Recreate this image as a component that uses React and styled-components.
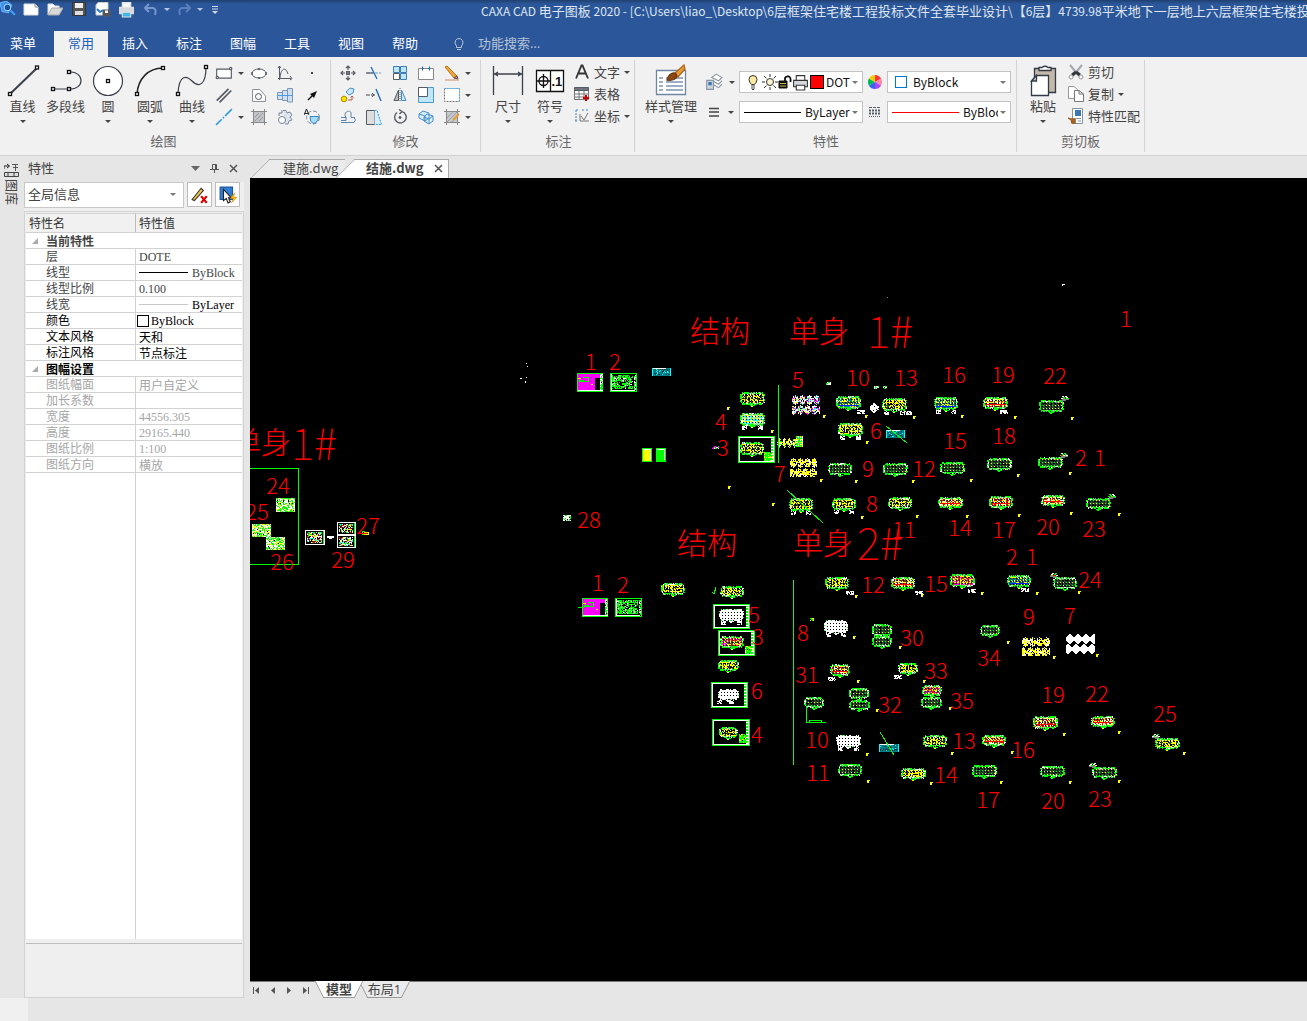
import React from 'react';
import styled, { createGlobalStyle, css } from 'styled-components';

const UI = "'Open Sans', 'Noto Sans CJK SC', sans-serif";
const HAN = "'Noto Sans CJK SC', sans-serif";
const BLUE = '#2b579a';
const EDGE = '#d2d2d2';

const Global = createGlobalStyle`
  * { box-sizing: border-box; }
  body { margin: 0; overflow: hidden; background: #e6e6e6; color: #444; font: 13px/18px ${UI}; }
  button, select, input { font: inherit; color: inherit; margin: 0; padding: 0; border: 0; background: none; }
  svg { display: block; flex: none; }
`;

const Shell = styled.div`display: flex; flex-direction: column; height: 100vh;`;

/* ---------- title bar ---------- */
const TitleBar = styled.header`
  display: flex; align-items: flex-start; height: 31px; overflow: hidden;
  background: linear-gradient(#20406f, ${BLUE} 4px); color: #dfe6f1;
`;
const QuickBar = styled.div`display: flex; width: 225px; flex: none; align-items: center; height: 18px; gap: 3px;`;
const QuickButton = styled.button`display: flex; align-items: center; justify-content: center; width: ${p => p.$w || 21}px; height: 18px; color: #c9d3e4;`;
const Title = styled.h1`
  margin: 2px 0 0 256px; font: 400 13px/18px ${HAN}; white-space: pre;
  span { font-size: 12px; }
`;

const MenuRow = styled.nav`display: flex; height: 26px; background: ${BLUE}; color: #fff;`;
const MenuTab = styled.button`
  width: ${p => p.$first ? 46 : 54}px; margin-right: ${p => p.$first ? 8 : 0}px; height: 26px; padding-bottom: 2px;
  ${p => p.$on && css`background: #f1f1f1; color: #1e62b8;`}
`;
const Search = styled.label`
  display: flex; align-items: center; gap: 12px; margin-left: 20px; color: #b7c3d8;
  input { width: 100px; height: 22px; padding-bottom: 2px; outline: 0; }
  input::placeholder { color: #b7c3d8; opacity: 1; }
`;

/* ---------- ribbon ---------- */
const Ribbon = styled.section`display: flex; height: 99px; padding: 3px 0; background: #f1f1f1; border-bottom: 1px solid ${EDGE}; color: #444;`;
const Group = styled.div`display: flex; flex-direction: column; padding: 2px ${p => p.$end ?? 4}px 0 ${p => p.$pad ?? 4}px; border-right: 1px solid ${EDGE}; flex: none;`;
const GroupBody = styled.div`display: flex; height: 70px;`;
const GroupName = styled.div`text-align: center; color: #666; height: 20px; line-height: 18px;`;
const BigButton = styled.button`
  display: flex; flex-direction: column; align-items: center; width: ${p => p.$w || 42}px; padding-top: 1px; white-space: nowrap;
  svg { height: 34px; }
  span { height: 20px; line-height: 18px; }
`;
const Arrow = styled.i`display: block; flex: none; width: 0; height: 0; border: 3px solid transparent; border-top-color: ${p => p.$c || '#444'}; border-bottom: 0; margin-top: ${p => p.$t || 0}px;`;
const IconGrid = styled.div`display: grid; grid-template-columns: ${p => p.$cols}; grid-template-rows: repeat(3, 22px);`;
const IconButton = styled.button`display: flex; align-items: center; justify-content: ${p => p.$start ? 'flex-start' : 'center'}; gap: 5px; min-width: 26px; padding-left: ${p => p.$start || 0}px;`;
const LineButton = styled.button`display: flex; align-items: center; height: 22px; gap: 4px; padding: 0 0 2px 3px;`;
const Column = styled.div`display: flex; flex-direction: column; gap: ${p => p.$gap || 0}px; padding-top: ${p => p.$top || 0}px;`;
const ComboRow = styled.div`display: flex; align-items: center; height: 22px;`;
const ComboIcon = styled.button`display: flex; align-items: center; justify-content: center; gap: 6px; width: ${p => p.$w}px; height: 22px;`;
const Combo = styled.label`
  display: flex; align-items: center; width: 124px; height: 22px; padding: 0 4px; background: #fff; border: 1px solid #c3c3c3; color: #111;
  select { flex: 1; min-width: 0; width: 0; appearance: none; outline: 0; overflow: hidden; text-overflow: clip; font: 12px/18px ${HAN}; margin: 0 2px 0 ${p => p.$gap || 4}px; }
`;

/* ---------- work area ---------- */
const Work = styled.main`flex: 1; display: flex; min-height: 0;`;
const Rail = styled.aside`width: 24px; flex: none; padding: 7px 4px; font-size: 13px;`;
const RailTab = styled.button`display: flex; flex-direction: column; align-items: center; width: 15px; gap: 1px; span { writing-mode: vertical-rl; text-orientation: sideways; line-height: 15px; height: 27px; }`;
const Panel = styled.section`width: 220px; flex: none; display: flex; flex-direction: column; background: #efefef;`;
const PanelHead = styled.div`display: flex; align-items: center; height: 26px; padding: 0 1px 2px 4px; background: #e6e6e6; h2 { flex: 1; margin: 0; font-size: 13px; line-height: 18px; font-weight: 400; } button { width: 19px; display: flex; justify-content: center; }`;
const PanelTools = styled.div`display: flex; gap: 3px; height: 29px;`;
const Scope = styled.label`display: flex; align-items: center; width: 160px; height: 26px; background: #fff; border: 1px solid #c8c8c8; padding: 0 7px 2px 3px; select { flex: 1; appearance: none; outline: 0; }`;
const ToolButton = styled.button`display: flex; align-items: center; justify-content: center; width: 25px; height: 25px; background: #fff; border: 1px solid #bdbdbd;`;
const Frame = styled.div`flex: 1; display: flex; flex-direction: column; min-height: 0; border: 1px solid ${EDGE}; padding: 1px;`;
const Sheet = styled.div`flex: 1; display: flex; flex-direction: column; background: #fff;`;
const Props = styled.table`
  width: 100%; table-layout: fixed; border-collapse: separate; border-spacing: 0; font: 12px/15px ${HAN}; color: #333;
  th, td { height: 16px; padding: 0; text-align: left; font-weight: 400; white-space: nowrap; border-bottom: 1px solid ${EDGE}; line-height: 15px; }
  thead th { width: 110px; height: 20px; line-height: 18px; padding-left: 3px; background: #f1f1f1; border-top: 1px solid ${EDGE}; }
  thead th:last-child { width: auto; }
  thead th:first-child { border-right: 1px solid #bbb; }
`;
const Name = styled.th`&& { padding-left: 20px; border-right: 1px solid ${EDGE}; color: ${p => p.$c}; } span { display: block; height: 15px; line-height: 14px; }`;
const Section = styled.th`&& { color: ${p => p.$c}; font-weight: 700; } div { display: flex; align-items: center; gap: 8px; padding-left: 6px; height: 15px; line-height: 14px; }`;
const Value = styled.td`
  && { color: ${p => p.$c}; }
  > div { display: flex; align-items: center; gap: ${p => p.$box ? 2 : 4}px; padding-left: ${p => p.$box ? 1 : 3}px; height: 15px; line-height: 14px; font-family: ${p => p.$latin ? "'Liberation Serif', serif" : HAN}; }
`;
const Rule = styled.span`width: 49px; height: 1px; background: ${p => p.$c};`;
const Swatch = styled.span`width: ${p => p.$s || 12}px; height: ${p => p.$s || 12}px; flex: none; border: 1px solid ${p => p.$line || '#000'}; background: ${p => p.$fill || '#fff'}; margin-left: ${p => p.$l || 0}px;`;
const Filler = styled.div`flex: 1; display: flex; &::before { content: ''; width: 110px; box-sizing: border-box; border-right: 1px solid ${EDGE}; }`;
const Notes = styled.div`height: 53px; margin-top: 4px; border-top: 1px solid #bdbdbd; background: #efefef;`;

const Docs = styled.section`flex: 1; min-width: 0; margin-left: 6px; display: flex; flex-direction: column;`;
const DocTabs = styled.div`display: flex; height: 22px; padding: 3px 0 0 10px; background: #e6e6e6;`;
const DocTab = styled.button`
  position: relative; z-index: 0; height: 19px; width: ${p => p.$w}px; padding: 0 0 2px ${p => p.$pad}px; display: flex; align-items: center; gap: 10px; white-space: nowrap;
  border: solid #aaa; border-width: 1px ${p => p.$on ? 1 : 0}px 0 0; background: ${p => p.$on ? '#fff' : '#ebebeb'}; margin-left: 10px; font-family: ${HAN}; font-weight: ${p => p.$on ? 700 : 400};
  &::before { content: ''; position: absolute; z-index: -1; left: -10px; top: -1px; width: 28px; height: 19px; box-sizing: border-box; border: solid #aaa; border-width: 1px 0 0 1px; background: inherit; transform: skewX(-45deg); }
`;
const Canvas = styled.div`flex: 1; min-height: 0; background: #000; overflow: hidden; svg { width: 100%; height: 100%; }`;
const LayoutTabs = styled.div`display: flex; height: 17px; border-top: 1px solid #777;`;
const Nav = styled.button`width: ${p => p.$w || 16}px; height: 17px; display: flex; align-items: center; justify-content: center;`;
const LayoutTab = styled.button`
  position: relative; z-index: ${p => p.$on ? 2 : 1}; width: ${p => p.$w}px; height: 16px; line-height: 12px; padding-bottom: 2px; font-weight: ${p => p.$on ? 700 : 400}; margin-left: ${p => p.$on ? 4 : 0}px;
  &::before, &::after { content: ''; position: absolute; z-index: -1; top: -1px; bottom: 0; width: 55%; background: ${p => p.$on ? '#fff' : '#ebebeb'}; border-bottom: 1px solid #999; }
  &::before { left: 2px; border-left: 1px solid #999; transform: skewX(27deg); }
  &::after { right: 2px; border-right: 1px solid #999; transform: skewX(-27deg); }
`;
const Status = styled.footer`height: 23px; display: flex; &::before { content: ''; width: 28px; background: #f0f0f0; }`;

/* ---------- icons ---------- */
const G = ({ s = 18, v = 16, h, children }) => (
  <svg width={s} height={h || s} viewBox={`0 0 ${v} ${h ? (h * v) / s : v}`} fill="none" stroke="#555c66" strokeWidth="1" aria-hidden="true">{children}</svg>
);
const Knot = ({ x, y }) => <rect x={x - 1.5} y={y - 1.5} width="3" height="3" fill="#fff" stroke="#111" />;
const Big = ({ children }) => (
  <svg width="34" height="34" viewBox="0 0 34 34" fill="none" stroke="#3b414b" strokeWidth="1.3" aria-hidden="true">{children}</svg>
);

const bigIcons = {
  line: <Big><path d="M4 31 31 5" strokeWidth="2" /><Knot x={4} y={31} /><Knot x={31} y={4.5} /></Big>,
  poly: <Big><path d="M4 26H22M20 9C36 8 36 27 20 26" strokeWidth="1.2" /><Knot x={4} y={26} /><Knot x={20} y={26} /><Knot x={20} y={9} /></Big>,
  circle: <Big><circle cx="17" cy="18" r="14.5" fill="#fff" strokeWidth="1.2" /><Knot x={17} y={18} /></Big>,
  arc: <Big><path d="M4 31C5 16 15 5 30 5" strokeWidth="1.5" stroke="#222" /><Knot x={4} y={31} /><Knot x={30} y={5} /></Big>,
  curve: <Big><path d="M3 31C4 10 12 13 17 18C24 25 31 22 31 4" strokeWidth="1.2" /><Knot x={3} y={31} /><Knot x={31} y={4} /></Big>,
  dim: <Big><path d="M2.500 3V32M31.500 3V32M3 11H31M7 9 4 11 7 13M27 9 30 11 27 13" /></Big>,
  sym: <Big><path d="M3.500 7.500H30.500V28.500H3.500ZM17.500 7.500V28.500" fill="#fff" stroke="#111" /><circle cx="10.5" cy="18" r="4.500" stroke="#111" /><path d="M10.500 11V25M4 18H17" stroke="#111" /><text x="18.500" y="23" fontSize="13" fontWeight="700" fontFamily="Liberation Sans" fill="#111" stroke="none">.1</text></Big>,
  style: <Big><path d="M2.500 7.500H31.500V31.500H2.500Z" fill="#fff" stroke="#6f86a3" /><path d="M5 15H9M12 15H29M5 19H9M12 19H29M5 23H9M12 23H29M5 27H9M12 27H29" stroke="#7c93b3" /><path d="M21 10 30 2 31 6 24 14Z" fill="#e39a3c" stroke="#b06a1d" /><path d="M13 17C15 10 20 9 22 11 25 16 18 18 13 17Z" fill="#8a4a13" stroke="#6d3a10" /></Big>,
  paste: <Big><path d="M8.500 5.500H29.500V29.500H8.500Z" fill="#c3b8a9" stroke="#333a47" /><path d="M13 7.500V4.500H16Q19 2 22 4.500H25V7.500Z" fill="#fff" stroke="#333a47" /><path d="M10.500 12.500H22.500V32.500H5.500V18Z" fill="#fff" stroke="#333a47" /><path d="M10.500 12.500V18H5.500Z" fill="#ccd" stroke="#333a47" /></Big>,
};

const draw = [
  <G><path d="M1.500 4.500H14.500V12.500H1.500Z" fill="#fff" /><circle cx="2" cy="12" r="1" fill="#fff" /><circle cx="14" cy="4" r="1" fill="#fff" /></G>,
  <G s={16}><ellipse cx="8" cy="8.500" rx="7" ry="4.500" fill="#fff" /><circle cx="8" cy="4" r=".8" /><path d="M1 7V10M15 7V10M7 13H9" strokeWidth="1.500" /></G>,
  <G s={16}><path d="M2.500 1V15M1 13.500H14" /><path d="M3 13C4 2 9 2 11 9M13 11 15 13.500 13 15M1 3 2.500 1 4 3" /></G>,
  <G s={16}><rect x="7" y="7" width="2" height="2" fill="#444" stroke="none" /></G>,
  <G><path d="M1.500 13 12 2.500M4 14.500 14.500 4" strokeWidth="1.500" /></G>,
  <G s={16}><path d="M1.500 14.500V2.500H9L14.500 9V14.500Z" fill="#fff" stroke="#8b929c" /><circle cx="7.500" cy="9.500" r="3" /></G>,
  <G s={16}><path d="M.5 5.500H5.500V12.500H.5ZM5.500 3.500H10.500V13.500H5.500ZM10.500 1.500H15.500V15H10.500Z" fill="#cfe0f2" stroke="#7d95b2" /><path d="M0 8.500H16" stroke="#4b9ce0" /></G>,
  <G s={16}><path d="M4 13 9 8" stroke="#111" strokeWidth="1.400" /><path d="M13 4 6 7 10 11Z" fill="#111" stroke="none" /></G>,
  <G><path d="M1 15 6 10M7 9 8 8M9 7 15 1" stroke="#2c9be0" strokeWidth="1.300" /></G>,
  <G s={16}><path d="M2.500 2.500H13.500V13.500H2.500Z" fill="#bfc3c8" /><path d="M2.500 0V16M13.500 0V16M0 2.500H16M0 13.500H16" stroke="#888" /><path d="M4 12 12 4M4 8 8 4M8 12 12 8" stroke="#999" /></G>,
  <G s={16}><path d="M6 1.500H9L10 4 13 3 15 6 13 8 15 11 12 12 11 15H8" fill="#dde4ec" stroke="#7b8ba0" /><circle cx="5" cy="11" r="3.500" fill="#fff" stroke="#6e7f96" /><path d="M2 7V4H5V1" stroke="#6e7f96" /></G>,
  <G s={16}><circle cx="9" cy="8.500" r="6.500" stroke="#7c8794" strokeDasharray="4 2" /><path d="M6 7.500H14.500Q14 14 9 14.500 6 13 6 7.500Z" fill="#a7dcf8" stroke="#3887c5" /><path d="M0 6 2.500 0 5 6M1 4.500H4" stroke="#222" /></G>,
];
const edit = [
  <G s={16}><path d="M8 1V5M8 11V15M1 8H5M11 8H15M6 3 8 1 10 3M6 13 8 15 10 13M3 6 1 8 3 10M13 6 15 8 13 10" strokeWidth="1.200" /><rect x="6.500" y="6.500" width="3" height="3" fill="#777" /></G>,
  <G s={16}><path d="M1 8H15" strokeDasharray="3 1" stroke="#6a9cd0" /><path d="M5 2 11 14" stroke="#1a69b8" strokeWidth="1.300" /><path d="M0 8H7" stroke="#444" /></G>,
  <G s={16}><path d="M1.500 1.500H7.500V7.500H1.500ZM8.500 1.500H14.500V7.500H8.500ZM8.500 8.500H14.500V14.500H8.500Z" fill="#bfe6fb" stroke="#3c7ebc" /><path d="M1.500 8.500H7.500V14.500H1.500Z" fill="#fff" /></G>,
  <G s={16}><path d="M4 3.500H.5V14.500H15.500V3.500H12M6 3.500H10" fill="#fff" stroke="#888" /><path d="M4.500 1.500V5.500M11.500 1.500V5.500M4 3.500H6M10 3.500H12" stroke="#1a69b8" /></G>,
  <G s={16}><path d="M1 2 3 1 13 11 10 13Z" fill="#efa63a" stroke="#b97519" /><path d="M10 13 13 11 14 14Z" fill="#f08080" stroke="#555" /><path d="M1 15H15" stroke="#d08a70" /></G>,
  <G s={16}><circle cx="4" cy="12" r="2.800" fill="#ffe000" stroke="#a89000" /><path d="M6 5 10 1 14 2 13 6 9 8Z" fill="#c8e9fb" stroke="#4a8ec7" /><path d="M8 13H12V9M10.500 10.500 12 9 13.500 10.500" stroke="#b55a4a" /></G>,
  <G s={16}><path d="M0 8H9" strokeDasharray="4 1" stroke="#444" /><path d="M10 2 15 14" stroke="#1a69b8" strokeWidth="1.300" /><path d="M6 6 8 8 6 10" /></G>,
  <G s={16}><path d="M6.500 3V13.500H2Z" fill="#bbb" /><path d="M9.500 3V13.500H14Z" fill="#bfe6fb" stroke="#4a8ec7" /><path d="M8 1V15" strokeDasharray="1 1" /></G>,
  <G s={16}><path d="M.5 .5H15.500V15.500H.5Z" fill="#bfe6fb" stroke="#4b9ac9" /><path d="M.5 .5H9.500V9.500H.5Z" fill="#fff" /></G>,
  <G s={16}><path d="M.5 1.500H15.500V14.500H.5Z" fill="#fff" stroke="#777" strokeDasharray="2 1" /><path d="M0 1.500H15M15.500 1V15" stroke="#55b3ea" strokeDasharray="2 1" /></G>,
  <G s={16}><path d="M1 8.500H6C2 2 12 0 11 5V8.500H15M1 13.500H14Q17 11 14 8.500M1 11.500H6M6 11.500V8" stroke="#5f86ad" /></G>,
  <G s={16}><path d="M.5 1.500H8.500V15.500H.5Z" fill="#ddd" /><path d="M8.500 1.500H11L15.500 15.500H8.500" fill="#d5effc" stroke="#2c9be0" strokeDasharray="2 1" /></G>,
  <G s={16}><path d="M5 3.500A5.800 5.800 0 1 0 10 2.600M7 .5 10 2.500 7.500 5" strokeWidth="1.400" /><circle cx="8" cy="8.500" r="1" fill="#444" /></G>,
  <G s={16}><path d="M1 5 5 2 11 4V9L7 12 1 9ZM6 8 9 5 15 7V12L11 15 6 12ZM1 5 7 7V12M6 8 11 10V15M11 10 15 7" fill="#d5effc" stroke="#4a8ec7" /></G>,
  <G s={16}><path d="M2.500 2.500H13.500V13.500H2.500Z" fill="#c5c9ce" /><path d="M0 2.500H16M0 13.500H16M2.500 0V16M13.500 0V16" stroke="#888" /><path d="M3 9 9 3M3 13 13 3M8 13 13 8" stroke="#9a9fa6" /><path d="M9 11 15 5" stroke="#eb9d2c" strokeWidth="2" /></G>,
];
const rows = {
  text: <G s={16}><path d="M2 14.500 7.500 1.500H8.500L14 14.500M4.500 9.500H11.500" strokeWidth="1.800" stroke="#333" /></G>,
  table: <G s={16}><path d="M.5 2.500H14.500V13.500H.5ZM.5 8H14.500M.5 11H14.500M5 5V13.500M10 5V13.500" fill="#fff" stroke="#777" /><path d="M.5 1.500H14.500V4.500H.5Z" fill="#70757c" /><path d="M12 9V15M9 12H15" stroke="#c00" strokeWidth="2" /></G>,
  coord: <G s={16}><path d="M2 2V14M2 2H5M9 1V4M13 1V4M1 13H4" stroke="#4489c7" strokeDasharray="2 1" /><path d="M6 6V13H15M7 8 10 12 14 5" stroke="#777" /></G>,
  cut: <G s={16}><path d="M2 1 11 12M14 1 5 12" strokeWidth="2" stroke="#a4a8ae" /><path d="M8 8 12 11M8 8 4 11" strokeWidth="3" stroke="#33373d" /><circle cx="3" cy="13" r="2" fill="#fff" stroke="#999" /><circle cx="13" cy="13" r="2" fill="#fff" stroke="#999" /></G>,
  copy: <G s={16}><path d="M.5 .5H6L9.500 3.500V12.500H.5Z" fill="#fff" stroke="#999" /><path d="M6.500 4.500H11L15.500 8V15.500H6.500ZM11 4.500V8H15.500" fill="#fff" stroke="#777" /></G>,
  match: <G s={16}><path d="M4.500 .5H14.500V15.500H4.500Z" fill="#fff" stroke="#8193a6" /><path d="M7 2H13V8H7Z" fill="#3a76b4" stroke="none" /><path d="M8 10.500H13M10 13H13" stroke="#8193a6" /><path d="M0 10 4 12M3 11H7V15H4Z" stroke="#9c5c22" fill="#b5651d" strokeWidth="1.500" /></G>,
};
const Bulb = <G s={18} v={18}><path d="M5 6.500A4 4 0 1 1 13 6.500Q13 9 10.500 11.500H7.500Q5 9 5 6.500Z" fill="#ffeaa0" stroke="#333" /><path d="M7 13H11M7 15H11M8 16.500H10" stroke="#444" /></G>;
const Sun = <G s={16}><circle cx="8" cy="8" r="3.500" fill="#fff6cf" stroke="#333" /><path d="M8 0V3M8 13V16M0 8H3M13 8H16M2 2 4.500 4.500M11.500 11.500 14 14M2 14 4.500 11.500M11.500 4.500 14 2" stroke="#333" /></G>;
const Lock = <G s={14} v={14}><path d="M1 6H9V13H1Z" fill="#111" stroke="#111" /><path d="M2 8.500H8M2 11H8" stroke="#c7bc3a" /><path d="M7 6V3Q8 1 11 1.500 13 2 12.500 7" stroke="#111" strokeWidth="1.800" /></G>;
const Printer = ({ c = '#333' }) => <G s={17}><path d="M4 6V1.500H12V6" fill="#fff" stroke={c} /><path d="M1.500 6H14.500V12H1.500Z" fill="#d5d9de" stroke={c} /><path d="M4 10.500H12V15H4Z" fill={c === '#333' ? '#fff' : '#40b6e8'} stroke={c} /></G>;

/* ---------- model space ---------- */
const LIME = '#00ff00', YEL = '#ffff00', WHT = '#ffffff', RED = '#ff0000', CYN = '#00ffff', TEAL = '#00808c', DRK = '#234a26', MAG = '#ff00ff', GRY = '#808080', BLK = '#000000';
const inks = {
  y: [DRK, YEL, YEL, BLK], d: [DRK, DRK, DRK, BLK], r: [DRK, YEL, RED, WHT], b: [TEAL, DRK, YEL, TEAL],
  c: [CYN, CYN, YEL, WHT], m: [YEL, DRK, MAG, RED], w: [WHT, WHT, WHT, WHT],
};
/* paint order: areas first, then outlines and highlights */
const layers = Object.fromEntries([DRK, TEAL, GRY, MAG, LIME, YEL, RED, '#0020ff', CYN, '#003c44', WHT, BLK].map((c) => [c, []]));
const dot = (x, y, c, w = 1, h = 1) => { if (c !== BLK) layers[c].push(`M${x} ${y}h${w}v${h}h-${w}z`); };
const noise = (x, y, k = 0) => {
  let n = (x * 374761393 + y * 668265263 + k * 2147483) | 0;
  n = Math.imul(n ^ (n >>> 13), 1274126177);
  return ((n ^ (n >>> 16)) >>> 0) / 4294967296;
};
const box = (x, y, w, h, c) => { dot(x, y, c, w, 1); dot(x, y + h - 1, c, w, 1); dot(x, y, c, 1, h); dot(x + w - 1, y, c, 1, h); };
function building(x, y, w, h, kind = 'd', wing) {
  const white = kind === 'w';
  for (let j = 0; j < h; j++) for (let i = 0; i < w; i++) {
    const edge = Math.min(i, w - 1 - i, j, h - 1 - j);
    const r = noise(x + i, y + j);
    if ((i < 2 || i > w - 3) && (j < 2 || j > h - 3)) continue;
    if (edge === 0) { if (r > 0.3) dot(x + i, y + j, white ? (r > 0.85 ? LIME : WHT) : r > 0.88 ? WHT : LIME); }
    else if (edge === 1) dot(x + i, y + j, white ? WHT : r > 0.65 ? WHT : LIME);
    else if (kind === 'b' && j === h - 4) dot(x + i, y + j, '#0020ff');
    else if (kind === 'r' && j === h - 5) dot(x + i, y + j, RED);
    else if (i % 3 === 0 && j % 3 === 0) continue;
    else if (j % 3 === 2 && i % 3 === 1 && !white) dot(x + i, y + j, kind === 'd' && r < 0.4 ? LIME : r > 0.2 ? YEL : WHT);
    else dot(x + i, y + j, inks[kind][Math.floor(r * 4)]);
  }
  dot(x + (w >> 1) - 2, y + h, white ? WHT : LIME, 5, 1);
  dot(x + (w >> 1) - 1, y + h + 1, white ? WHT : kind === 'd' ? LIME : YEL, 2, 1);
  if (wing) for (let i = 0; i < 12; i++) {
    const px = wing > 0 ? x + w - 8 + i : x + 8 - i;
    dot(px, y - Math.floor(i / 3) + 1, GRY, 2, 2);
    if (i > 4) { dot(px, y - 4 + (i % 3), noise(px, y) > 0.5 ? LIME : WHT, 2, 1); dot(px, y - 2, noise(px, y, 2) > 0.6 ? RED : LIME); }
  }
}
function feet(x, y, w, h) {
  [2, w - 7].forEach((dx) => { for (let j = 0; j < 4; j++) for (let i = 0; i < 5; i++) if (noise(x + i + dx, y + j) > 0.3) dot(x + dx + i, y + h + j, WHT); });
}
function speckle(x, y, w, h, colors, fill = 0.8) {
  for (let j = 0; j < h; j++) for (let i = 0; i < w; i++) if (noise(x + i, y + j) < fill) dot(x + i, y + j, colors[Math.floor(noise(x + i, y + j, 7) * colors.length)]);
}
/* rows of small round detail drawings; the second row is shifted */
function details(x, y, w, h, colors, gap = 7, fill = 0.85) {
  for (let j = 0; j < h; j++) for (let i = 0; i < w; i++) {
    const u = ((i + (j > 9 ? 2 : 0)) % gap) - gap / 2 + 0.5;
    const v = (j % 10) - 4.5;
    if ((u * u) / ((gap / 2 - 0.3) ** 2) + (v * v) / 22 < 1 && noise(x + i, y + j) < fill) dot(x + i, y + j, colors[Math.floor(noise(x + i, y + j, 3) * colors.length)]);
  }
}
function sheet(x, y, w, h) {
  box(x, y, w, h, LIME); box(x + 1, y + 1, w - 2, h - 2, WHT);
  for (let j = 2; j < h - 2; j++) dot(x + w - 4, y + j, j % 3 ? LIME : WHT, 3, 1);
}

[
  [740, 392, 25, 13, 'y'], [740, 413, 25, 13, 'c'], [836, 396, 25, 13, 'b'], [882, 398, 25, 13, 'y'], [934, 397, 24, 13, 'b'], [983, 397, 25, 12, 'r'],
  [1039, 400, 25, 12, 'd', 1], [838, 423, 25, 13, 'y'], [828, 463, 24, 12, 'd'], [883, 463, 25, 12, 'd'], [940, 462, 25, 12, 'd'], [987, 458, 25, 12, 'd'],
  [1038, 457, 25, 11, 'd', 1], [789, 498, 24, 13, 'y'], [832, 498, 24, 12, 'y'], [888, 497, 24, 12, 'y'], [938, 497, 25, 11, 'r'], [989, 496, 24, 12, 'r'],
  [1041, 495, 24, 11, 'r'], [1086, 498, 25, 11, 'd', 1], [825, 577, 24, 12, 'y'], [891, 577, 24, 12, 'r'], [950, 574, 25, 13, 'm'], [1007, 575, 24, 12, 'b'],
  [1053, 577, 24, 12, 'd', -1], [824, 620, 24, 13, 'w'], [872, 624, 20, 12, 'd'], [872, 636, 20, 11, 'd'], [980, 625, 20, 11, 'd'], [830, 664, 20, 12, 'r'],
  [898, 663, 20, 11, 'y'], [849, 688, 20, 11, 'd'], [849, 700, 21, 10, 'd'], [922, 685, 20, 11, 'm'], [921, 697, 21, 11, 'd'], [804, 697, 20, 11, 'd'],
  [836, 735, 25, 12, 'w'], [923, 735, 24, 12, 'y'], [982, 735, 24, 11, 'r'], [1033, 716, 25, 13, 'r'], [1091, 716, 24, 11, 'r'], [1155, 738, 25, 11, 'y', -1],
  [838, 764, 24, 12, 'd'], [901, 768, 25, 11, 'y'], [972, 765, 25, 12, 'd'], [1040, 766, 25, 11, 'd'], [1092, 767, 25, 11, 'd', -1],
  [661, 583, 24, 12, 'y'], [720, 586, 24, 11, 'y'], [718, 660, 21, 11, 'y'],
].forEach((b) => building(...b));
[[740, 413, 25, 13], [838, 423, 25, 13], [934, 397, 24, 13], [824, 620, 24, 13], [789, 498, 24, 13], [832, 498, 24, 12], [882, 398, 25, 13], [836, 735, 25, 12]].forEach((b) => feet(...b));
[[738, 436, 37, 27], [713, 604, 37, 25], [718, 630, 37, 26], [711, 682, 37, 26], [712, 719, 38, 27]].forEach((b) => sheet(...b));
[[740, 442, 24, 13, 'y'], [719, 609, 25, 12, 'w'], [720, 636, 24, 12, 'm'], [718, 689, 21, 11, 'w'], [719, 727, 19, 11, 'y']].forEach((b) => building(...b));
feet(719, 609, 25, 12); feet(715, 689, 21, 11);
[[764, 452], [745, 646], [739, 734]].forEach(([x, y]) => speckle(x, y, 9, 9, [LIME, LIME, LIME, YEL], 0.95));
[[577, 373], [582, 598]].forEach(([x, y]) => {
  box(x, y, 26, 19, LIME); dot(x + 1, y + 1, MAG, 22, 4); dot(x + 1, y + 5, MAG, 17, 12); dot(x + 1, y + 17, WHT, 24, 1);
  dot(x + 1, y + 5, YEL, 3, 1); dot(x + 2, y + 7, LIME, 5, 2); dot(x + 6, y + 4, LIME, 6, 1); dot(x + 11, y + 4, LIME, 1, 5); dot(x + 6, y + 8, LIME, 6, 1); dot(x + 14, y + 11, YEL, 2, 1);
  speckle(x + 23, y + 1, 3, 17, [WHT, LIME], 0.9);
});
[[610, 373], [615, 598]].forEach(([x, y]) => { speckle(x + 2, y + 2, 21, 14, [LIME, LIME, LIME, LIME, LIME, WHT, BLK], 0.75); box(x, y, 27, 19, LIME); dot(x + 1, y + 1, WHT, 1, 17); dot(x + 1, y + 17, WHT, 24, 1); speckle(x + 24, y + 2, 2, 15, [LIME, WHT]); });
[[652, 368, 19, 8], [886, 430, 19, 8], [879, 744, 20, 8]].forEach(([x, y, w, h]) => {
  dot(x, y, TEAL, w, h); speckle(x + 1, y + 1, w - 2, h - 2, ['#003c44', CYN, '#003c44'], 0.35); dot(x + 1, y, WHT, w - 6, 1); dot(x, y, CYN, 1, h); dot(x + w - 1, y, CYN, 1, h);
});
[[642, YEL], [656, LIME]].forEach(([x, c]) => { box(x, 448, 10, 14, LIME); dot(x + 1, 450, c, 8, 11); dot(x + 1, 449, WHT, 7, 1); dot(x + 8, 449, WHT, 1, 11); });
speckle(563, 515, 8, 6, [WHT, WHT, LIME]);
speckle(712, 446, 7, 3, [MAG, LIME, WHT]);
details(792, 395, 28, 20, [WHT, WHT, YEL, CYN, WHT, MAG]);
details(777, 438, 19, 10, [YEL, WHT, YEL, LIME], 5);
speckle(796, 436, 7, 11, [LIME, LIME, WHT, YEL], 1);
details(790, 458, 27, 19, [YEL, YEL, WHT]);
details(1022, 637, 28, 19, [YEL, YEL, WHT]);
details(1066, 634, 29, 20, [WHT], 8, 1);
details(870, 403, 9, 10, [WHT], 8);
speckle(826, 382, 5, 3, [LIME, WHT]); speckle(874, 386, 5, 3, [LIME, WHT]); speckle(883, 386, 4, 3, [LIME, WHT]);
speckle(810, 618, 4, 3, [LIME, YEL]);
[[846, 591], [915, 591], [968, 589], [1021, 588], [894, 675], [828, 677], [857, 410], [904, 411], [1000, 410]].forEach(([x, y]) => speckle(x, y, 8, 4, [WHT], 0.75));
[[276, 498, 19, 14], [252, 524, 19, 13], [266, 537, 19, 13]].forEach(([x, y, w, h]) => { speckle(x, y, w, h, [WHT, WHT, YEL, LIME, LIME], 0.95); box(x, y, w, h, LIME); });
[[305, 530, 20, 15], [337, 522, 19, 13], [337, 535, 19, 13]].forEach(([x, y, w, h]) => { speckle(x + 2, y + 2, w - 5, h - 4, [WHT, LIME, YEL, WHT, RED, CYN], 0.7); box(x, y, w, h, WHT); dot(x + w - 2, y, LIME, 2, h); dot(x, y, LIME, 1, h); });
dot(327, 536, WHT, 7, 2); dot(329, 538, WHT, 3, 1); box(362, 531, 3, 4, LIME); box(364, 532, 5, 3, YEL);
[
  [727, 407], [728, 486], [771, 430], [820, 479], [772, 503], [823, 415], [865, 415], [913, 416], [961, 415], [1014, 416], [1071, 417], [866, 441], [855, 480], [912, 480],
  [970, 479], [1017, 474], [1069, 472], [861, 516], [916, 515], [966, 515], [1018, 514], [1070, 512], [1118, 513], [855, 595], [921, 594], [981, 592], [1036, 592],
  [1078, 591], [853, 636], [899, 646], [1007, 641], [1053, 656], [1096, 654], [857, 680], [923, 680], [876, 709], [949, 707], [1063, 733], [1118, 731], [1183, 752],
  [951, 752], [1011, 751], [866, 753], [867, 780], [930, 782], [1000, 781], [1069, 781], [1118, 780],
].forEach(([x, y]) => { dot(x, y, YEL, 3, 1); dot(x, y + 1, YEL, 2, 2); });
dot(1062, 284, WHT, 3, 1); dot(1062, 285, WHT, 1, 1); dot(526, 363, WHT); dot(527, 366, WHT); dot(520, 378, WHT, 2, 1); dot(526, 377, WHT); dot(525, 381, WHT, 1, 2); dot(887, 297, GRY);

/* text, centre x, bottom of the lettering */
const marks = [
  ['1', 591, 373], ['2', 615, 373], ['5', 798, 391], ['10', 858, 389], ['13', 906, 389], ['16', 954, 386], ['19', 1003, 386], ['22', 1055, 387], ['1', 1126, 330],
  ['4', 721, 433], ['3', 723, 459], ['6', 876, 442], ['15', 955, 452], ['18', 1004, 447], ['7', 780, 485], ['9', 868, 480], ['12', 924, 480], ['2', 1081, 469], ['1', 1100, 469],
  ['8', 872, 515], ['11', 904, 541], ['14', 960, 539], ['17', 1004, 541], ['20', 1048, 538], ['23', 1094, 540], ['28', 589, 531], ['24', 278, 497], ['25', 257, 523],
  ['26', 282, 573], ['29', 343, 571], ['27', 368, 537], ['2', 1012, 568], ['1', 1032, 568], ['12', 873, 596], ['15', 936, 595], ['24', 1090, 591], ['8', 803, 644],
  ['30', 912, 649], ['34', 989, 669], ['9', 1029, 628], ['7', 1070, 627], ['31', 807, 686], ['33', 936, 682], ['32', 890, 716], ['35', 962, 712], ['19', 1053, 706],
  ['22', 1097, 705], ['25', 1165, 725], ['10', 817, 751], ['13', 964, 752], ['16', 1023, 761], ['11', 818, 784], ['14', 946, 786], ['17', 988, 811], ['20', 1053, 812],
  ['23', 1100, 810], ['1', 598, 594], ['2', 623, 596], ['5', 754, 626], ['3', 758, 648], ['6', 757, 702], ['4', 757, 746],
];
const headings = [
  ['结构', 720, 342], ['单身', 819, 342], ['1#', 890, 348], ['结构', 707, 554], ['单身', 823, 554], ['2#', 880, 560], ['单身', 261, 453], ['1#', 314, 460],
];
const Mark = styled.text`fill: #ff0000; text-anchor: middle; font: 300 22px ${HAN};`;
const Heading = styled.text`fill: #ff0000; text-anchor: middle; font: ${p => p.$han ? '300 30px' : '100 44px'} ${HAN};`;

function Model() {
  return (
    <svg role="img" aria-label="模型空间">
      <g transform="translate(-250 -178)">
        <g shapeRendering="crispEdges">
          {Object.entries(layers).map(([c, d]) => <path key={c} fill={c} d={d.join('')} />)}
          <path d="M778.500 385V463M787 490 823 523M886 426 907 443M880 732 894 755M806.500 707V722.500H826M809.500 722V720.500H821V722M712 592 714 594 716 587M578 607H584M793.500 580V765" stroke={LIME} fill="none" />
          <rect x="240.500" y="468.500" width="58" height="96" stroke={LIME} fill="none" />
        </g>
        {headings.map(([t, x, y]) => <Heading key={t + x} x={x} y={y} $han={!t.includes('#')}>{t}</Heading>)}
        {marks.map(([t, x, y]) => <Mark key={t + x} x={x} y={y - 3}>{t}</Mark>)}
      </g>
    </svg>
  );
}

/* ---------- data ---------- */
const current = [
  ['层', 'DOTE', '#444'], ['线型', 'ByBlock', '#444', 'line', '#000'], ['线型比例', '0.100', '#444'], ['线宽', 'ByLayer', '#000', 'line', '#c8c8c8', '#444'],
  ['颜色', 'ByBlock', '#000', 'box'], ['文本风格', '天和', '#000'], ['标注风格', '节点标注', '#000'],
];
const paper = [['图纸幅面', '用户自定义'], ['加长系数', ''], ['宽度', '44556.305'], ['高度', '29165.440'], ['图纸比例', '1:100'], ['图纸方向', '横放']];
const titleText = 'CAXA CAD 电子图板 2020 - [C:\\Users\\liao_\\Desktop\\6层框架住宅楼工程投标文件全套毕业设计\\【6层】4739.98平米地下一层地上六层框架住宅楼投标';
const Fold = () => <svg width="6" height="6" viewBox="0 0 6 6"><path d="M6 0V6H0Z" fill="#aaa" /></svg>;
const Row = ({ name, value, c, kind, ink, nameC }) => (
  <tr>
    <Name scope="row" $c={nameC || c}><span>{name}</span></Name>
    <Value $c={c} $box={kind === 'box'} $latin={/^[\x00-\x7f]*$/.test(value)}>
      <div>{kind === 'line' && <Rule $c={ink} />}{kind === 'box' && <Swatch />}{value}</div>
    </Value>
  </tr>
);
const BigItem = ({ icon, label, w, arrow = true }) => <BigButton $w={w}>{bigIcons[icon]}<span>{label}</span>{arrow && <Arrow $t={3} />}</BigButton>;
const LineItem = ({ icon, label, arrow }) => <LineButton>{rows[icon]}<span>{label}</span>{arrow && <Arrow />}</LineButton>;
const DropMark = () => <Arrow $c="#777" />;
const Cross = () => <svg width="9" height="9" stroke="#555" strokeWidth="1.5"><path d="M1 1 8 8M8 1 1 8" /></svg>;

export default function App() {
  return (
    <Shell>
      <Global />
      <TitleBar>
        <QuickBar>
          <QuickButton $w={17} aria-label="程序"><G s={17}><path d="M0 2 6 0 11 4 8 11 2 10Z" fill="#3f8fe8" stroke="#64b2ff" /><circle cx="7" cy="6" r="3" fill="#174f99" stroke="#9cf" /><path d="M10 9 14 13" stroke="#3aa0ff" strokeWidth="2" /></G></QuickButton>
          <QuickButton aria-label="新建"><G s={16}><path d="M1 3H12L15 6V14H1Z" fill="#fff" stroke="#ddd" /><path d="M12 3V6H15" stroke="#888" /></G></QuickButton>
          <QuickButton aria-label="打开"><G s={16}><path d="M1 14V3H6L8 5H12V8" fill="#fff" stroke="#ddd" /><path d="M1 14 5 7H16L12 14Z" fill="#d9d9d9" stroke="#aaa" /></G></QuickButton>
          <QuickButton aria-label="保存"><G s={16}><path d="M1.500 1.500H14.500V14.500H1.500Z" fill="#555" stroke="#333" /><path d="M4 2H12V7H4Z" fill="#eee" stroke="none" /><path d="M4 10H12V14H4Z" fill="#ddd" stroke="none" /></G></QuickButton>
          <QuickButton aria-label="另存为"><G s={16}><path d="M3 1.500H13V14H1V4Z" fill="#fff" stroke="#ccc" /><path d="M2 8 5 11 8 9" stroke="#2a7ad0" strokeWidth="2" /><path d="M8 9H15V15H8Z" fill="#555" /><path d="M10 9.500H13V12H10Z" fill="#fff" stroke="none" /></G></QuickButton>
          <QuickButton aria-label="打印"><Printer c="#e2e2e2" /></QuickButton>
          <QuickButton aria-label="撤销"><G s={16}><path d="M6 3 2 7 6 11M2 7H10Q14 8 12 14" stroke="#7898cc" strokeWidth="2" /></G></QuickButton>
          <QuickButton $w={6} aria-label="撤销列表"><Arrow $c="#b9c6dd" /></QuickButton>
          <QuickButton aria-label="重做"><G s={16}><path d="M10 3 14 7 10 11M14 7H6Q2 8 4 14" stroke="#5d80bb" strokeWidth="2" /></G></QuickButton>
          <QuickButton $w={6} aria-label="重做列表"><Arrow $c="#b9c6dd" /></QuickButton>
          <QuickButton $w={18} aria-label="自定义"><G s={10} v={10}><path d="M2 2.500H8M2 5H8" stroke="#d0d8e6" /><path d="M2 7H8L5 10Z" fill="#d0d8e6" stroke="none" /></G></QuickButton>
        </QuickBar>
        <Title>{titleText.split(/([\x20-\x7e]+)/).map((part, i) => (i % 2 ? <span key={i}>{part}</span> : part))}</Title>
      </TitleBar>
      <MenuRow>
        {['菜单', '常用', '插入', '标注', '图幅', '工具', '视图', '帮助'].map((t, i) => <MenuTab key={t} $first={i === 0} $on={i === 1}>{t}</MenuTab>)}
        <Search>
          <G s={14} v={14}><path d="M4.500 9Q2 6 3.500 3.500 5 1.500 7 1.500 9 1.500 10.500 3.500 12 6 9.500 9V10.500H4.500ZM5 12.500H9" stroke="#b7c3d8" /></G>
          <input type="text" placeholder="功能搜索..." aria-label="功能搜索" />
        </Search>
      </MenuRow>
      <Ribbon>
        <Group $pad={1}>
          <GroupBody>
            <BigItem icon="line" label="直线" w={43} /><BigItem icon="poly" label="多段线" w={43} arrow={false} /><BigItem icon="circle" label="圆" /><BigItem icon="arc" label="圆弧" /><BigItem icon="curve" label="曲线" />
            <IconGrid $cols="33px 26px 26px 28px">
              {draw.map((ic, i) => <IconButton key={i} aria-label={`绘图工具 ${i + 1}`} $start={i % 4 === 0 ? 2 : 0}>{ic}{(i === 0 || i === 8) && <Arrow />}</IconButton>)}
            </IconGrid>
          </GroupBody>
          <GroupName>绘图</GroupName>
        </Group>
        <Group>
          <GroupBody>
            <IconGrid $cols="26px 26px 26px 26px 37px">
              {edit.map((ic, i) => <IconButton key={i} aria-label={`修改工具 ${i + 1}`} $start={i % 5 === 4 ? 5 : 0}>{ic}{i % 5 === 4 && <Arrow $t={1} />}</IconButton>)}
            </IconGrid>
          </GroupBody>
          <GroupName>修改</GroupName>
        </Group>
        <Group $pad={6}>
          <GroupBody>
            <BigItem icon="dim" label="尺寸" /><BigItem icon="sym" label="符号" />
            <Column><LineItem icon="text" label="文字" arrow /><LineItem icon="table" label="表格" /><LineItem icon="coord" label="坐标" arrow /></Column>
          </GroupBody>
          <GroupName>标注</GroupName>
        </Group>
        <Group $pad={6} $end={5}>
          <GroupBody>
            <BigItem icon="style" label="样式管理" w={60} />
            <Column $gap={8} $top={9}>
              <ComboRow>
                <ComboIcon $w={38} aria-label="图层"><G s={18}><path d="M6 4 10 1 15 4 12 7ZM7 7 12 10 15 7M7 10 12 13 15 10" fill="#fff" stroke="#8b96a5" /><path d="M1.500 6.500H7.500V14.500H1.500Z" fill="#cfd6de" stroke="#8b96a5" /><path d="M3 8H6V11H3Z" fill="#3a76b4" stroke="none" /></G><Arrow /></ComboIcon>
                <Combo $gap={2}>{Bulb}{Sun}{Lock}<Printer /><Swatch $s={14} $fill="#ff0000" $l={1} /><select aria-label="当前图层"><option>DOTE</option></select><DropMark /></Combo>
                <ComboIcon $w={24} aria-label="颜色"><G s={16}><g stroke="none">{['#f33', '#f8a', '#a4f', '#36e', '#0b5', '#ec0'].map((c, i) => <path key={c} d="M8 8V1A7 7 0 0 1 14.100 4.500Z" fill={c} transform={`rotate(${i * 60} 8 8)`} />)}</g></G></ComboIcon>
                <Combo $gap={6}><Swatch $line="#0078d7" $l={3} /><select aria-label="当前颜色"><option>ByBlock</option></select><DropMark /></Combo>
              </ComboRow>
              <ComboRow>
                <ComboIcon $w={38} aria-label="线宽"><G s={16}><path d="M3 4.500H13M3 8H13M3 12H13" stroke="#444" strokeWidth="1.500" /></G><Arrow /></ComboIcon>
                <Combo><svg width="57" height="3"><path d="M0 1.500H57" stroke="#000" /></svg><select aria-label="当前线宽"><option>ByLayer</option></select><DropMark /></Combo>
                <ComboIcon $w={24} aria-label="线型"><G s={14} v={14}><path d="M1 2.500H13" strokeDasharray="3 1" /><path d="M1 5.500H13M1 8.500H13" strokeDasharray="2 1" strokeWidth="2" /><path d="M1 11.500H13" strokeDasharray="1 1" /></G></ComboIcon>
                <Combo><svg width="67" height="3"><path d="M0 1.500H67" stroke="#f00" /></svg><select aria-label="当前线型"><option>ByBlock</option></select><DropMark /></Combo>
              </ComboRow>
            </Column>
          </GroupBody>
          <GroupName>特性</GroupName>
        </Group>
        <Group>
          <GroupBody>
            <BigItem icon="paste" label="粘贴" w={44} />
            <Column><LineItem icon="cut" label="剪切" /><LineItem icon="copy" label="复制" arrow /><LineItem icon="match" label="特性匹配" /></Column>
          </GroupBody>
          <GroupName>剪切板</GroupName>
        </Group>
      </Ribbon>
      <Work>
        <Rail><RailTab><svg width="15" height="15" viewBox="0 0 15 15" fill="none" stroke="#222"><path d="M0 6V3H5M3 1 5.500 3 3 5" /><path d="M8 1.500H14M11.500 1.500V8M9 4.500H14" stroke="#555" /><path d="M.5 9.500H14.500V13.500H.5ZM4 9.500V13.500M10 9.500V13.500" fill="#ddd" stroke="#444" /></svg><span>图库</span></RailTab></Rail>
        <Panel>
          <PanelHead>
            <h2>特性</h2>
            <button aria-label="菜单"><svg width="9" height="5"><path d="M0 0H9L4.500 5Z" fill="#666" /></svg></button>
            <button aria-label="固定"><svg width="9" height="10" fill="none" stroke="#555"><path d="M2.500 6V1.500H6.500V6M0 6.500H9M4.500 7V10M5.500 1V6" /></svg></button>
            <button aria-label="关闭"><Cross /></button>
          </PanelHead>
          <PanelTools>
            <Scope><select aria-label="对象范围"><option>全局信息</option></select><DropMark /></Scope>
            <ToolButton aria-label="清除"><G s={18}><path d="M1 12 9 2 11 4 3 13Z" fill="#f5c842" stroke="#333" /><path d="M9 9 14 15M14 9 9 15" stroke="#d00" strokeWidth="2" /></G></ToolButton>
            <ToolButton aria-label="快速选择"><G s={18}><path d="M1 1H12V12H1Z" fill="#2f7fd6" stroke="#1c56a0" /><path d="M4 3V13L6.500 11 8 15 10 14 8.500 10.500H11Z" fill="#fff" stroke="#222" /><path d="M14 6 10 11H13L11 15 16 10H13Z" fill="#ffc400" stroke="#d77a00" strokeWidth=".5" /></G></ToolButton>
          </PanelTools>
          <Frame>
            <Sheet>
              <Props>
                <thead><tr><th scope="col">特性名</th><th scope="col">特性值</th></tr></thead>
                <tbody>
                  <tr><Section colSpan="2" $c="#444"><div><Fold />当前特性</div></Section></tr>
                  {current.map(([n, v, c, kind, ink, nc]) => <Row key={n} name={n} value={v} c={c} kind={kind} ink={ink} nameC={nc} />)}
                  <tr><Section colSpan="2" $c="#000"><div><Fold />图幅设置</div></Section></tr>
                  {paper.map(([n, v]) => <Row key={n} name={n} value={v} c="#a6a6a6" />)}
                </tbody>
              </Props>
              <Filler />
            </Sheet>
            <Notes />
          </Frame>
        </Panel>
        <Docs>
          <DocTabs>
            <DocTab $w={75} $pad={13}><span>建施.dwg</span></DocTab>
            <DocTab $w={94} $pad={11} $on><span>结施.dwg</span><Cross /></DocTab>
          </DocTabs>
          <Canvas><Model /></Canvas>
          <LayoutTabs>
            <Nav $w={13} aria-label="第一页"><svg width="7" height="7"><path d="M6 0V7L2 3.500Z" fill="#555" /><path d="M.5 0V7" stroke="#555" /></svg></Nav>
            <Nav $w={18} aria-label="上一页"><svg width="5" height="7"><path d="M5 0V7L1 3.500Z" fill="#555" /></svg></Nav>
            <Nav aria-label="下一页"><svg width="5" height="7"><path d="M0 0V7L4 3.500Z" fill="#555" /></svg></Nav>
            <Nav aria-label="最后一页"><svg width="7" height="7"><path d="M1 0V7L5 3.500Z" fill="#555" /><path d="M6.500 0V7" stroke="#555" /></svg></Nav>
            <LayoutTab $on $w={44}>模型</LayoutTab><LayoutTab $w={47}>布局1</LayoutTab>
          </LayoutTabs>
        </Docs>
      </Work>
      <Status />
    </Shell>
  );
}
